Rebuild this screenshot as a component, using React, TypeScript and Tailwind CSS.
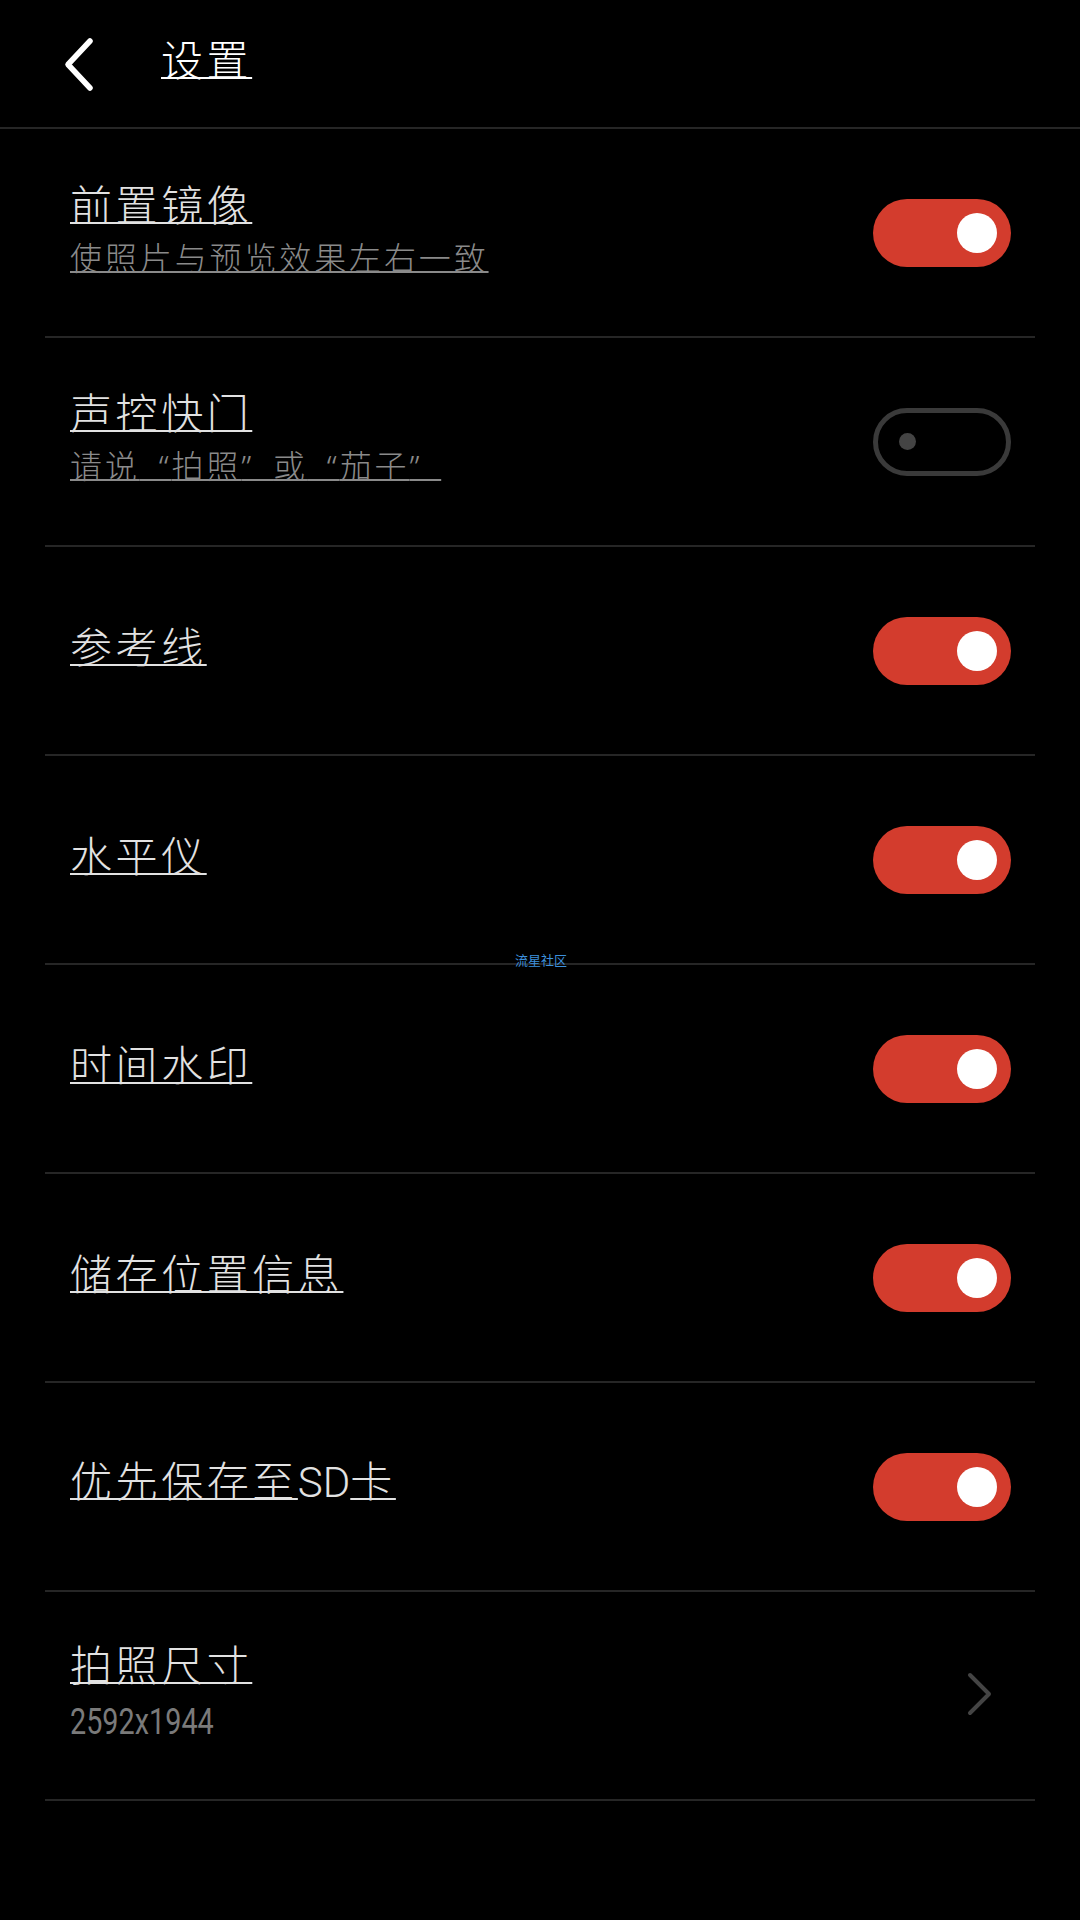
import React from 'react';

type Item = {
  title: string[];
  sub?: React.ReactNode;
  kind: 'on' | 'off' | 'link';
  value?: string;
};

const Q: React.FC<{ open?: boolean }> = ({ open }) => (
  <span style={{ fontFamily: '"Noto Sans", Roboto, sans-serif' }}>
    {open ? '\u2002“' : '”\u2002'}
  </span>
);

// segments: odd indexes are latin runs without underline
const items: Item[] = [
  { title: ['前置镜像'], sub: '使照片与预览效果左右一致', kind: 'on' },
  {
    title: ['声控快门'],
    sub: (
      <>
        请说<Q open />拍照<Q />或<Q open />茄子<Q />
      </>
    ),
    kind: 'off',
  },
  { title: ['参考线'], kind: 'on' },
  { title: ['水平仪'], kind: 'on' },
  { title: ['时间水印'], kind: 'on' },
  { title: ['储存位置信息'], kind: 'on' },
  { title: ['优先保存至', 'SD', '卡'], kind: 'on' },
  { title: ['拍照尺寸'], kind: 'link', value: '2592x1944' },
];

const Toggle: React.FC<{ on: boolean }> = ({ on }) =>
  on ? (
    <div className="w-[138px] h-[68px] rounded-full bg-[#d33c2d] flex items-center justify-end pr-[14px]">
      <div className="w-[40px] h-[40px] rounded-full bg-white" />
    </div>
  ) : (
    <div className="w-[138px] h-[68px] rounded-full border-[5px] border-[#3a3a3a] flex items-center pl-[21px]">
      <div className="w-[17px] h-[17px] rounded-full bg-[#444]" />
    </div>
  );

const App: React.FC = () => {
  return (
    <div
      className="relative w-[1080px] h-[1920px] bg-black overflow-hidden"
      style={{ fontFamily: '"Noto Sans CJK SC", "Noto Sans", Roboto, sans-serif' }}
    >
      <div className="h-[129px] border-b-2 border-[#262626] flex items-start pt-[30px]">
        <svg width="40" height="56" viewBox="0 0 40 56" className="ml-[60px] mt-[7px]">
          <path d="M30 4 L8 27.5 L30 51" fill="none" stroke="#fff" strokeWidth="5.5" strokeLinecap="round" strokeLinejoin="round" />
        </svg>
        <span className="ml-[61px] text-[42px] leading-[56px] font-light text-white tracking-[0.085em] underline decoration-2">
          设置
        </span>
      </div>

      <div className="px-[45px]">
        {items.map((it, i) => (
          <div key={i} className="h-[209px] border-b-2 border-[#262626] flex items-center pl-[25px] pr-[24px]">
            <div className="flex-1 flex flex-col pb-[12px]">
              <div className="flex items-baseline text-[42px] leading-[50px] font-light text-[#e2e2e2]">
                {it.title.map((seg, j) =>
                  j % 2 === 1 ? (
                    <span key={j} className="tracking-normal" style={{ fontFamily: 'Roboto, "Noto Sans", sans-serif' }}>
                      {seg}
                    </span>
                  ) : (
                    <span key={j} className="tracking-[0.085em] underline decoration-2">
                      {seg}
                    </span>
                  )
                )}
              </div>
              {it.sub && (
                <span className="mt-[8px] text-[32px] leading-[40px] font-light text-[#8a8a8a] tracking-[0.09em] underline decoration-2 self-start whitespace-pre">
                  {it.sub}
                </span>
              )}
              {it.value && (
                <span
                  className="mt-[14px] text-[36px] leading-[40px] text-[#7a7a7a] inline-block scale-x-[0.8] origin-left self-start"
                  style={{ fontFamily: 'Roboto, "Liberation Sans", sans-serif' }}
                >
                  {it.value}
                </span>
              )}
            </div>
            {it.kind === 'link' ? (
              <svg width="30" height="44" viewBox="0 0 30 44" className="mr-[18px] mt-[-4px]">
                <path d="M7 3 L26 22 L7 41" fill="none" stroke="#444" strokeWidth="4" strokeLinecap="round" strokeLinejoin="round" />
              </svg>
            ) : (
              <Toggle on={it.kind === 'on'} />
            )}
          </div>
        ))}
      </div>

      <span className="absolute left-[515px] top-[952px] text-[13px] leading-[16px] text-[#3d90dc]">
        流星社区
      </span>
    </div>
  );
};

export default App;
